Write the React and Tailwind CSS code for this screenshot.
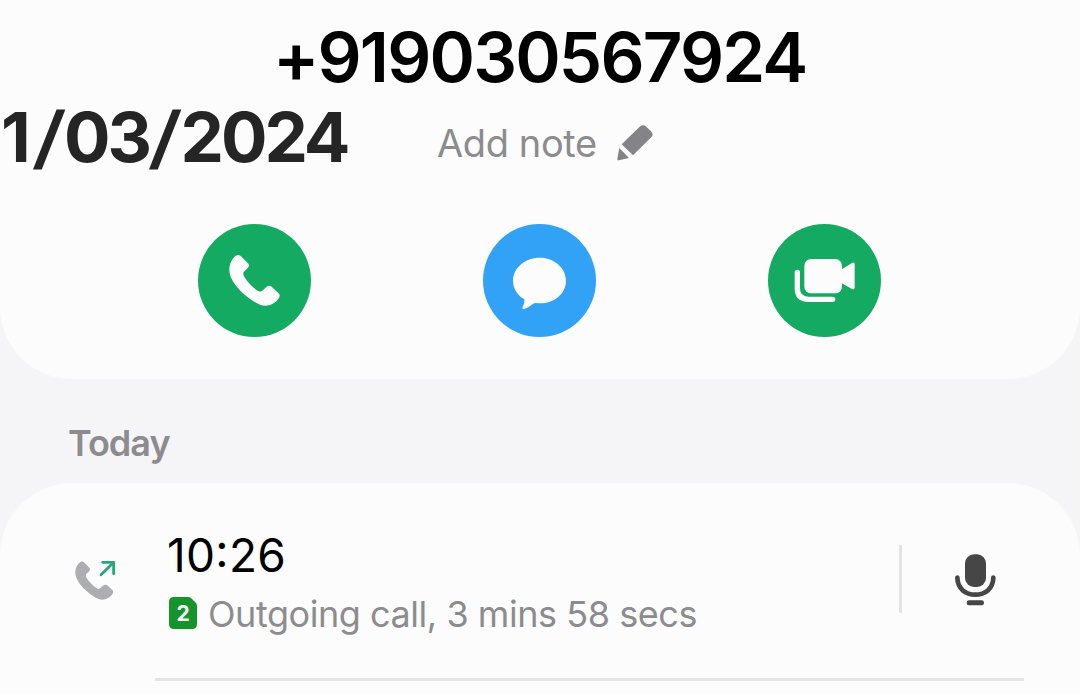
function HandsetPath(props) {
  return (
    <path
      d="M112 96 Q121 90 129 97 L150 118 Q156 125 149 132 L137 144 Q134 151 139 159 C150 177 168 193 182 202 Q187 204 192 201 L206 188 Q213 183 221 188 L243 209 Q248 216 241 224 C229 241 207 250 186 242 C146 224 96 177 94 140 C93 120 102 106 112 96 Z"
      {...props}
    />
  )
}

const actions = [
  {
    name: 'call',
    color: 'bg-[#14aa61]',
    icon: <HandsetPath />,
  },
  {
    name: 'message',
    color: 'bg-[#31a2f5]',
    icon: (
      <path d="M170 101 C214 101 249 132 249 170 C249 209 214 238 170 238 L155 237 C144 243 131 255 121 255 Q116 255 119 249 Q126 237 124 226 C104 214 90 194 90 170 C90 132 126 101 170 101 Z" />
    ),
  },
  {
    name: 'video',
    color: 'bg-[#14aa61]',
    icon: (
      <>
        <rect x="109" y="105" width="113" height="103" rx="20" />
        <path d="M221 136 L252 117 Q260 113 260 121 L260 190 Q260 199 252 195 L221 178 Z" />
        <path d="M88 145 V193 Q88 226 121 226 H194" fill="none" stroke="#fcfcfc" strokeWidth="16" strokeLinecap="round" />
      </>
    ),
  },
]

function ActionButton({ color, icon }) {
  return (
    <button className={`w-[113px] h-[113px] rounded-full ${color}`}>
      <svg width="113" height="113" viewBox="0 0 339 339" fill="#fcfcfc">{icon}</svg>
    </button>
  )
}

function PencilIcon() {
  return (
    <svg width="36" height="36" viewBox="0 0 108 108" fill="#848486">
      <path d="M14 58 L68 5 Q78 -3 88 5 L102 19 Q111 28 103 37 L48 91 Z" />
      <path d="M7 69 L36 99 L5 106 Q0 107 1 101 Z" />
    </svg>
  )
}

function OutgoingIcon() {
  return (
    <svg width="42" height="42" viewBox="0 0 126 126">
      <g transform="translate(-70 -66) scale(.755)">
        <HandsetPath fill="#acaeb0" />
      </g>
      <path d="M78 44 L115 8 M83 7 H116 V41" fill="none" stroke="#26a67a" strokeWidth="8.5" strokeLinecap="round" strokeLinejoin="round" />
    </svg>
  )
}

function MicIcon() {
  return (
    <svg width="42" height="52" viewBox="0 0 126 156" fill="#464646">
      <rect x="33" y="1" width="63" height="98" rx="27" />
      <path d="M10 71 C11 105 35 122 64 122 C93 122 117 105 118 71" fill="none" stroke="#464646" strokeWidth="14" strokeLinecap="round" />
      <rect x="38" y="139" width="52" height="15" rx="7" />
    </svg>
  )
}

function SimBadge() {
  return (
    <div className="relative w-[28px] h-[32px] text-white">
      <svg className="absolute inset-0" width="28" height="32" viewBox="0 0 28 32" fill="#14942a">
        <path d="M5 0 H19 Q21 0 22 1 L27 6 Q28 7 28 9 V27 Q28 32 23 32 H5 Q0 32 0 27 V5 Q0 0 5 0 Z" />
      </svg>
      <span className="relative block text-center text-[21px] leading-[33px] font-bold">2</span>
    </div>
  )
}

function Slash() {
  return <span className="inline-block translate-x-[3px] -skew-x-[7deg] tracking-[4.5px]">/</span>
}

export default function App() {
  return (
    <div className="w-[1080px] h-[694px] overflow-hidden bg-[#f5f5f8] font-['Inter',sans-serif] whitespace-nowrap">
      <section className="h-[379px] rounded-b-[72px] bg-[#fcfcfc] pt-[17px]">
        <h1 className="pl-[273px] text-[69px] leading-[80px] font-semibold tracking-[-1.85px] text-black">+919030567924</h1>
        <div className="flex h-[80px]">
          <div className="w-[437px] pl-px text-[69px] leading-[80px] font-bold tracking-[-3px] text-[#252525]">
            <span className="tracking-[2px]">1</span>
            <Slash />
            03
            <Slash />
            2024
          </div>
          <div className="w-[180px] pt-[6px] text-[38px] leading-[80px] tracking-[-0.4px] text-[#8c8c8e]">Add note</div>
          <div className="pt-[28px]"><PencilIcon /></div>
        </div>
        <div className="flex gap-[172px] pl-[198px] pt-[47px]">
          {actions.map((a) => (
            <ActionButton key={a.name} color={a.color} icon={a.icon} />
          ))}
        </div>
      </section>

      <h2 className="h-[104px] pl-[68px] pt-[44px] text-[36px] leading-[40px] font-semibold tracking-[-1px] text-[#8c8c8f]">Today</h2>

      <section className="h-[290px] rounded-t-[72px] bg-[#fcfcfc]">
        <div className="flex h-[195px]">
          <div className="w-[167px] pl-[75px] pt-[77px]"><OutgoingIcon /></div>
          <div className="w-[732px] pt-[47px]">
            <div className="text-[46px] leading-[50px] tracking-[0.3px] text-black [font-feature-settings:'case']">10:26</div>
            <div className="mt-[17px] flex items-start gap-[11px] pl-[2px] text-[36px] leading-[32px] tracking-[-0.45px] text-[#8c8c8f]">
              <SimBadge />
              <span className="pt-px">Outgoing call, 3 mins 58 secs</span>
            </div>
          </div>
          <div className="mt-[62px] h-[68px] w-[3px] bg-[#e3e3e3]" />
          <div className="pl-[52px] pt-[71px]"><MicIcon /></div>
        </div>
        <div className="ml-[155px] h-[3px] w-[869px] bg-[#e4e4e4]" />
      </section>
    </div>
  )
}
